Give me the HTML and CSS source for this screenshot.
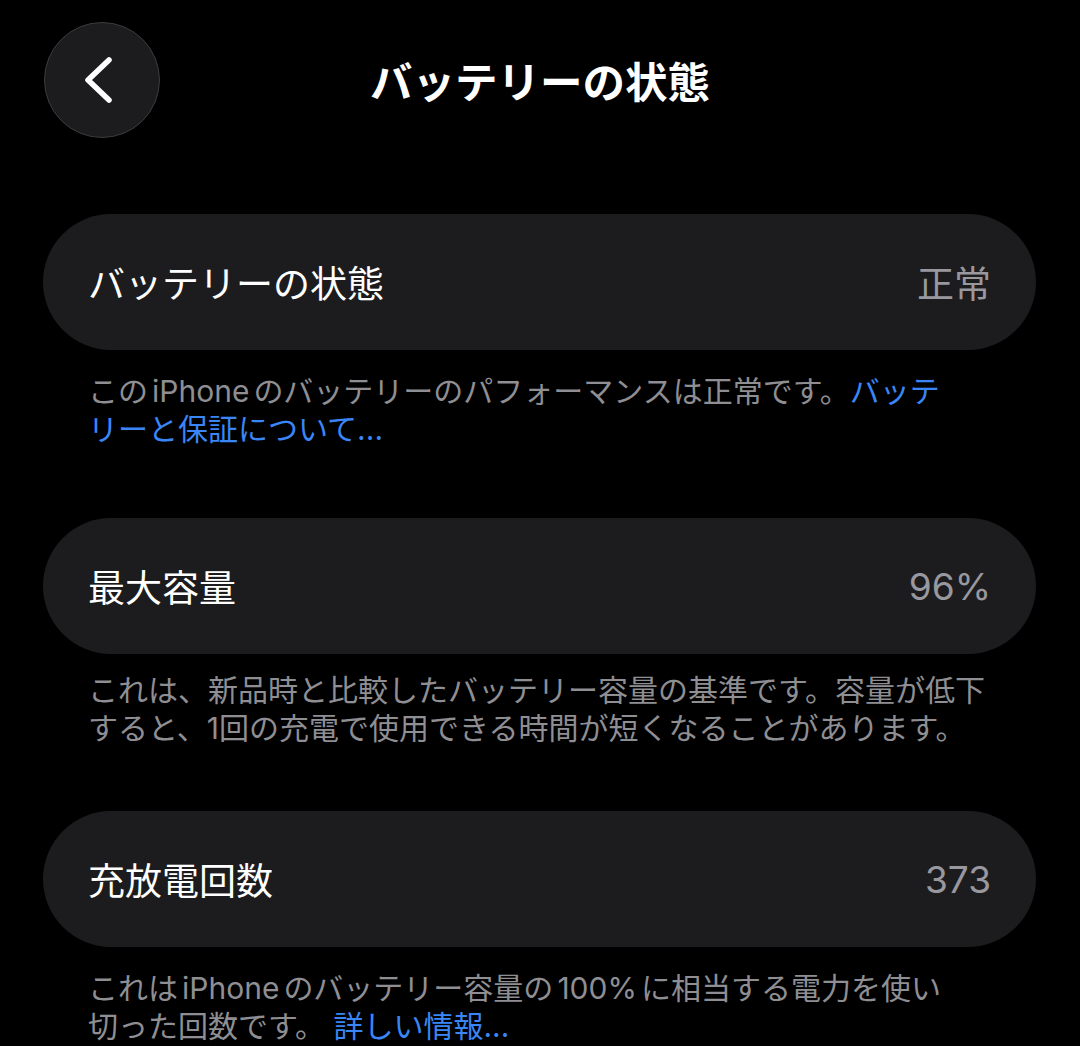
FILE: index.html
```html
<!DOCTYPE html>
<html lang="ja">
<head>
<meta charset="utf-8">
<title>バッテリーの状態</title>
<link rel="stylesheet" href="styles.css">
</head>
<body>
<div class="screen">
  <header class="topbar">
    <button class="back" aria-label="戻る">
      <svg width="116" height="116" viewBox="0 0 116 116"><path d="M65 38 L44 58 L65 78" fill="none" stroke="#fff" stroke-width="5.5" stroke-linecap="round" stroke-linejoin="round"/></svg>
    </button>
    <h1 class="title">バッテリーの状態</h1>
    <div></div>
  </header>

  <section class="group">
    <div class="card"><span class="label">バッテリーの状態</span><span class="value">正常</span></div>
    <p class="note">この<span class="latin">iPhone</span>のバッテリーのパフォーマンスは正常です。<a class="link">バッテ<br>リーと保証について...</a></p>
  </section>

  <section class="group group-tight">
    <div class="card"><span class="label">最大容量</span><span class="value">96%</span></div>
    <p class="note">これは、新品時と比較したバッテリー容量の基準です。容量が低下<br>すると、1回の充電で使用できる時間が短くなることがあります。</p>
  </section>

  <section class="group group-last">
    <div class="card"><span class="label">充放電回数</span><span class="value">373</span></div>
    <p class="note">これは<span class="latin">iPhone</span>のバッテリー容量の<span class="latin">100%</span>に相当する電力を使い<br>切った回数です。 <a class="link">詳しい情報...</a></p>
  </section>
</div>
</body>
</html>
```

FILE: styles.css
```css
html, body {
  margin: 0;
  padding: 0;
  background: #000;
}
body {
  font-family: "Inter", "Noto Sans CJK JP", sans-serif;
  color: #fff;
  width: 1080px;
  height: 1046px;
  overflow: hidden;
}
.screen {
  display: flex;
  flex-direction: column;
}
.topbar {
  display: grid;
  grid-template-columns: 116px 1fr 116px;
  align-items: center;
  padding: 22px 44px 0 44px;
  margin-bottom: 76px;
}
.back {
  width: 116px;
  height: 116px;
  border-radius: 50%;
  background: #1c1c1e;
  border: 1.5px solid #3c3c3f;
  padding: 0;
  display: flex;
  align-items: center;
  justify-content: center;
  box-sizing: border-box;
}
.back svg {
  display: block;
  flex: none;
}
.title {
  margin: 0;
  text-align: center;
  font-size: 42.5px;
  font-weight: 700;
  line-height: 1;
  font-family: "Noto Sans CJK JP", sans-serif;
  color: #fff;
}
.group {
  display: flex;
  flex-direction: column;
  height: 304px;
  flex: none;
}
.group-tight {
  height: 293px;
}
.group-tight .note {
  margin-top: 17px;
}
.group-last {
  height: auto;
}
.card {
  margin: 0 44px 0 43px;
  height: 136px;
  border-radius: 68px;
  background: #1c1c1e;
  display: flex;
  align-items: center;
  justify-content: space-between;
  padding: 0 45px;
  flex: none;
}
.label {
  font-size: 37px;
  color: #fff;
  font-family: "Noto Sans CJK JP", sans-serif;
}
.value {
  font-size: 37px;
  color: #98989e;
}
.note {
  margin: 22px 40px 0 88px;
  font-size: 30px;
  line-height: 38px;
  color: #8e8e93;
  white-space: nowrap;
}
.latin {
  margin: 0 4px;
}
.link {
  color: #3a86f6;
  text-decoration: none;
}
```
